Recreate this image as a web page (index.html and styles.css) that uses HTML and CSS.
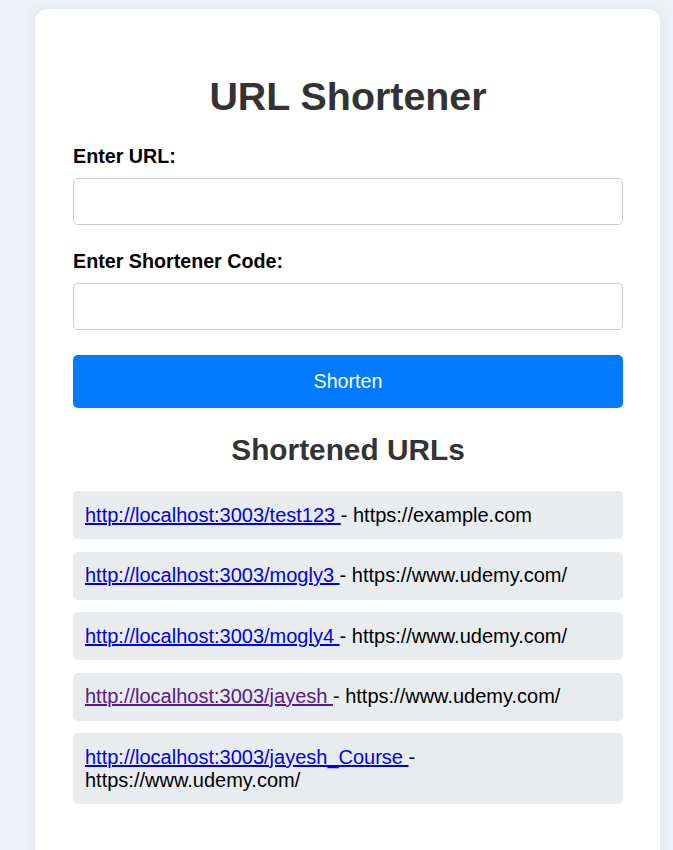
FILE: index.html
```html
<!DOCTYPE html>
<html lang="en">
<head>
<meta charset="utf-8">
<title>URL Shortener</title>
<link rel="stylesheet" href="styles.css">
</head>
<body>
<div class="card">
  <h1 class="title">URL Shortener</h1>
  <form class="form">
    <label class="label" for="url">Enter URL:</label>
    <input class="input" id="url" type="text">
    <label class="label" for="code">Enter Shortener Code:</label>
    <input class="input" id="code" type="text">
    <button class="btn" type="button">Shorten</button>
  </form>
  <h2 class="subtitle">Shortened URLs</h2>
  <ul class="list">
    <li class="item"><a class="link" href="#">http://localhost:3003/test123 </a>- https://example.com</li>
    <li class="item"><a class="link" href="#">http://localhost:3003/mogly3 </a>- https://www.udemy.com/</li>
    <li class="item"><a class="link" href="#">http://localhost:3003/mogly4 </a>- https://www.udemy.com/</li>
    <li class="item"><a class="link visited" href="#">http://localhost:3003/jayesh </a>- https://www.udemy.com/</li>
    <li class="item"><a class="link" href="#">http://localhost:3003/jayesh_Course </a>- https://www.udemy.com/</li>
  </ul>
</div>
</body>
</html>
```
FILE: styles.css
```css
html, body {
  margin: 0;
  background: #eef1f5;
}
body {
  padding: 9px 13px 0 35px;
  font-family: "Liberation Sans", Arial, sans-serif;
  font-size: 19.7px;
}
.card {
  background: #ffffff;
  border-radius: 12px;
  box-shadow: 0 0 12px rgba(0, 0, 0, 0.08);
  padding: 39px 37px 60px 38px;
  width: 625px;
  box-sizing: border-box;
}
.title {
  margin: 26px 0;
  font-size: 39.4px;
  font-weight: bold;
  color: #333333;
  text-align: center;
  line-height: 45px;
}
.form {
  display: flex;
  flex-direction: column;
}
.label {
  font-weight: bold;
  color: #000;
  line-height: 23px;
  margin-bottom: 10px;
}
.input {
  height: 47px;
  box-sizing: border-box;
  border: 1px solid #cccccc;
  border-radius: 5px;
  margin: 0 0 25px;
  font-size: 19.7px;
  padding: 0 12px;
}
.btn {
  height: 53px;
  border: none;
  border-radius: 5px;
  background: #007bff;
  color: #ffffff;
  font-family: "Liberation Sans", Arial, sans-serif;
  font-size: 19.7px;
  margin: 0;
}
.subtitle {
  margin: 24px 0;
  font-size: 29.8px;
  font-weight: bold;
  color: #333333;
  text-align: center;
  line-height: 35px;
}
.list {
  list-style: none;
  margin: 0;
  padding: 0;
  display: flex;
  flex-direction: column;
  gap: 12.5px;
}
.item {
  background: #e9ecef;
  border-radius: 5px;
  padding: 12.5px 12px;
  font-size: 20px;
  line-height: 23px;
  color: #000;
}
.link {
  color: #0000ee;
  text-decoration: underline;
}
.link.visited {
  color: #551a8b;
}
```
